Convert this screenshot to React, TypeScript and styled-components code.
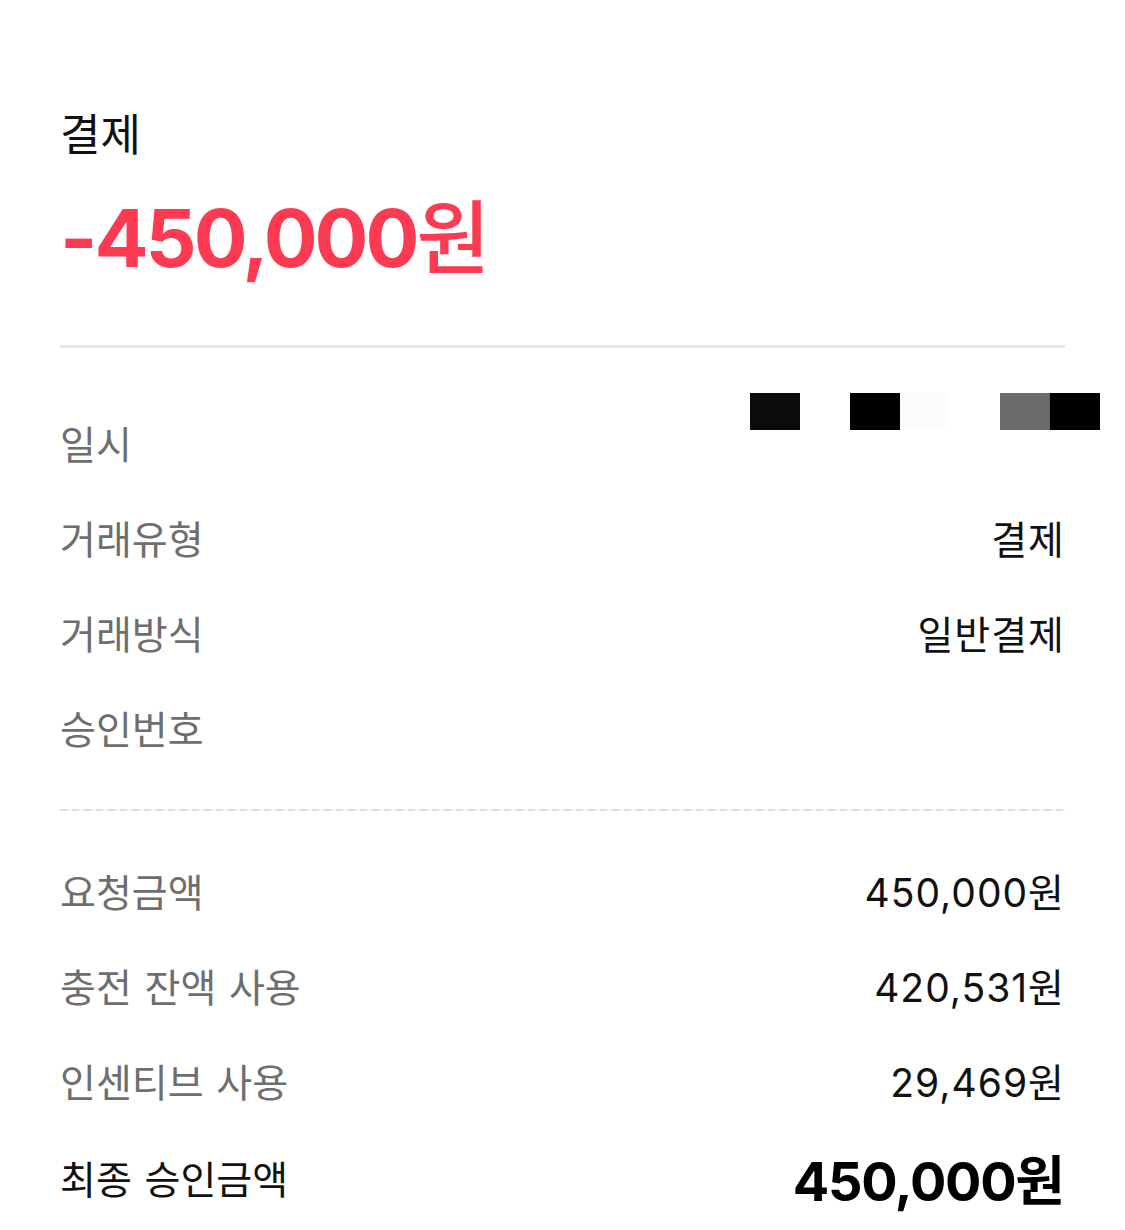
import React from "react";
import styled, { createGlobalStyle } from "styled-components";

const Global = createGlobalStyle`
  html, body { margin: 0; padding: 0; background: #ffffff; }
  body { font-family: Inter, "Noto Sans CJK KR", sans-serif; -webkit-font-smoothing: antialiased; }
`;

const Page = styled.div`
  padding: 107px 60px 0;
  box-sizing: border-box;
  width: 1125px;
  overflow: hidden;
`;

const Title = styled.h1`
  margin: 0;
  font-family: "Noto Sans CJK KR", sans-serif;
  font-size: 44px;
  line-height: 50px;
  font-weight: 400;
  color: #111111;
`;

const Amount = styled.div`
  margin-top: 25px;
  font-family: Inter, "Noto Sans CJK KR", sans-serif;
  font-size: 80px;
  line-height: 100px;
  font-weight: 700;
  letter-spacing: -3px;
  color: #fc3a52;
`;

const Unit = styled.span<{ $weight?: number }>`
  font-family: "Noto Sans CJK KR", sans-serif;
  font-weight: ${(p) => p.$weight ?? 400};
  letter-spacing: 0;
`;

const Divider = styled.hr`
  margin: 57px 0 0;
  border: 0;
  height: 3px;
  background: #e7e7e7;
`;

const Dashed = styled.div`
  margin-top: 35px;
  height: 2px;
  background: repeating-linear-gradient(
    to right,
    #dcdcdc 0 7px,
    #f5f5f5 7px 12px
  );
`;

const List = styled.div<{ $top: number }>`
  display: flex;
  flex-direction: column;
  padding-top: ${(p) => p.$top}px;
`;

const Row = styled.div<{ $h?: number }>`
  position: relative;
  display: flex;
  align-items: center;
  justify-content: space-between;
  height: ${(p) => p.$h ?? 95}px;
`;

const Label = styled.span<{ $dark?: boolean }>`
  font-size: 39px;
  word-spacing: 4px;
  color: ${(p) => (p.$dark ? "#111111" : "#6e6e6e")};
  font-family: "Noto Sans CJK KR", sans-serif;
  font-weight: 400;
`;

const Value = styled.span`
  font-size: 39px;
  letter-spacing: 1px;
  color: #111111;
  font-weight: 400;
`;

const BigValue = styled.span`
  font-size: 54px;
  letter-spacing: -1.3px;
  color: #000000;
  font-weight: 700;
`;

const Redaction = styled.div`
  position: absolute;
  left: 690px;
  top: -1px;
  display: flex;
`;

const Block = styled.div<{ $c: string }>`
  width: 50px;
  height: 37px;
  background: ${(p) => p.$c};
`;

const redaction = ["#0b0b0b", "#ffffff", "#000000", "#fcfcfc", "#ffffff", "#6b6b6b", "#000000"];

export default function App() {
  return (
    <>
      <Global />
      <Page>
        <Title>결제</Title>
        <Amount>
          -450,000<Unit $weight={500}>원</Unit>
        </Amount>
        <Divider />
        <List $top={46}>
          <Row>
            <Label>일시</Label>
            <Redaction>
              {redaction.map((c, i) => (
                <Block key={i} $c={c} />
              ))}
            </Redaction>
          </Row>
          <Row>
            <Label>거래유형</Label>
            <Value>결제</Value>
          </Row>
          <Row>
            <Label>거래방식</Label>
            <Value>일반결제</Value>
          </Row>
          <Row>
            <Label>승인번호</Label>
          </Row>
        </List>
        <Dashed />
        <List $top={31}>
          <Row>
            <Label>요청금액</Label>
            <Value>450,000원</Value>
          </Row>
          <Row>
            <Label>충전 잔액 사용</Label>
            <Value>420,531원</Value>
          </Row>
          <Row>
            <Label>인센티브 사용</Label>
            <Value>29,469원</Value>
          </Row>
          <Row $h={100}>
            <Label $dark>최종 승인금액</Label>
            <BigValue>
              450,000<Unit $weight={700}>원</Unit>
            </BigValue>
          </Row>
        </List>
      </Page>
    </>
  );
}
